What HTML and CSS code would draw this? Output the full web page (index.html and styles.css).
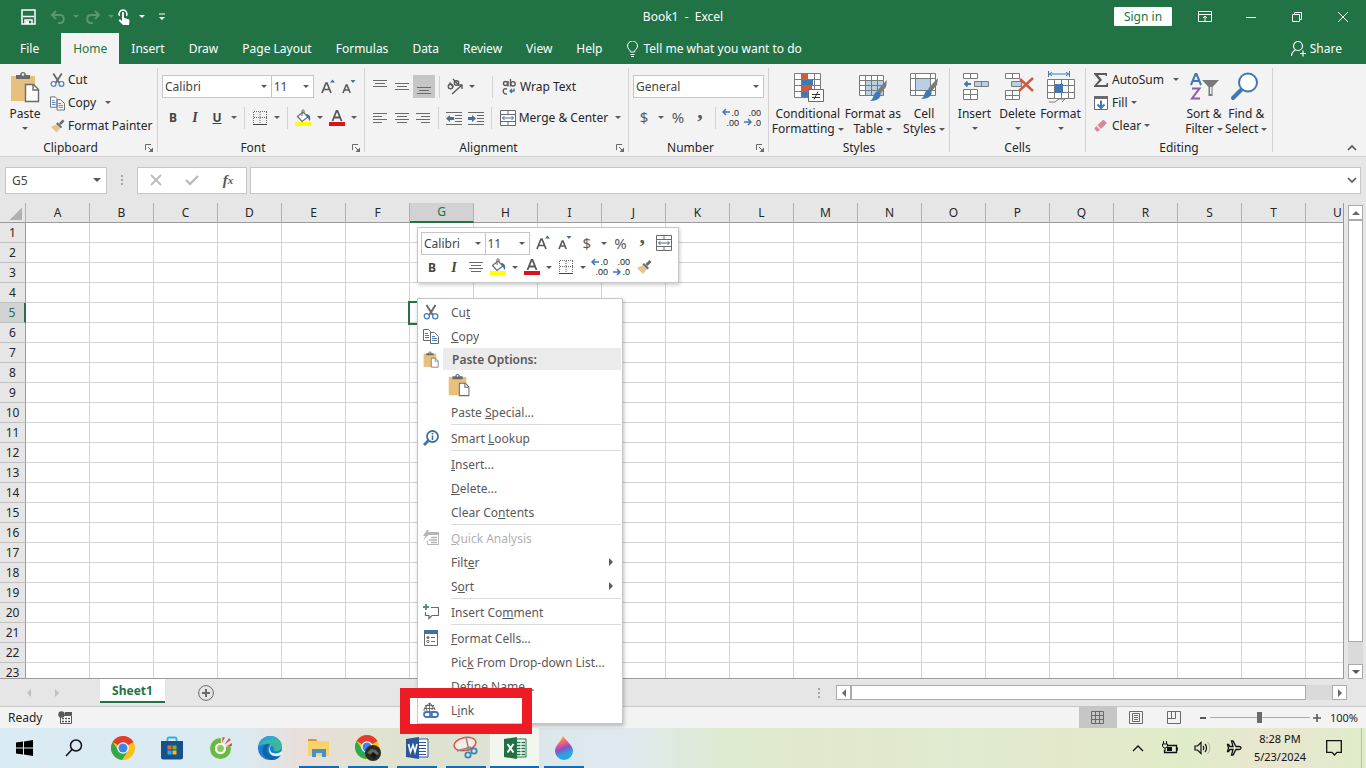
FILE: index.html
```
<!DOCTYPE html>
<html lang="en">
<head>
  <meta charset="UTF-8">
  <meta name="viewport" content="width=device-width, initial-scale=1">
  <title>Book1 - Excel</title>
  <link rel="stylesheet" href="styles.css">
</head>
<body>

  <!-- shared icons -->
  <svg class="sprite" aria-hidden="true">
    <symbol id="cut" viewBox="0 0 16 16">
      <path d="M3.5 1 9.8 11M12.5 1 6.2 11" stroke="#6a6a6a" stroke-width="2" fill="none"/>
      <circle cx="3.8" cy="12.2" r="2.6" fill="none" stroke="#4a7ebb" stroke-width="1.3"/>
      <circle cx="12.2" cy="12.2" r="2.6" fill="none" stroke="#4a7ebb" stroke-width="1.3"/>
    </symbol>
    <symbol id="copy" viewBox="0 0 16 16">
      <path d="M.5 1.500h5l2 2v9h-7zM7.500 4.500h4l4 4v7h-8z" fill="#fff" stroke="#6a6a6a"/>
      <path d="M2 5.500h3M2 7.500h4M2 9.500h4M9 8.500h3M9 10.500h5M9 12.500h5" stroke="#4a7ebb"/>
    </symbol>
    <symbol id="brush" viewBox="0 0 16 16">
      <path d="M1 9 7 6l4 4-4 5z" fill="#e8c48a"/>
      <path d="m6.500 5.500 1.500-1.500 5 5-1.500 1.500z" fill="#6a6a6a"/>
      <path d="m9.500 5 4-4 2 2-4 4z" fill="#6a6a6a"/>
    </symbol>
    <symbol id="paste" viewBox="0 0 30 32">
      <path d="M1 5h24v25H1z" fill="#e8c07d"/>
      <path d="M6 8V4h4c0-4 6-4 6 0h4v4z" fill="#6a6a6a"/>
      <circle cx="13" cy="3.500" r="1.300" fill="#f3f3f3"/>
      <path d="M15.500 13.500h8l5 5v12h-13z" fill="#fff" stroke="#6a6a6a" stroke-width="1.400"/>
      <path d="M23 14v5h5" fill="none" stroke="#6a6a6a" stroke-width="1.400"/>
    </symbol>
    <symbol id="grow" viewBox="0 0 16 16">
      <path d="m2 14 4-10h1l4 10M3.500 10.500h6" fill="none" stroke="#595959" stroke-width="1.700"/>
      <path d="m10 3.500 2.500-3 2.500 3z" fill="#41719c"/>
    </symbol>
    <symbol id="shrink" viewBox="0 0 16 16">
      <path d="m2 14 3.200-8h.8l3.200 8M3.200 11h5" fill="none" stroke="#595959" stroke-width="1.600"/>
      <path d="m9.500 1 2.500 3 2.500-3z" fill="#41719c"/>
    </symbol>
    <symbol id="borders" viewBox="0 0 16 16">
      <path d="M2 1.500h13M1.500 2v12M14.500 2v12M2 7.500h13M8 2v12" stroke="#6a6a6a" stroke-dasharray="1 1" fill="none"/>
      <path d="M1 14.500h14" stroke="#444"/>
    </symbol>
    <symbol id="fill" viewBox="0 0 18 18">
      <path d="M3.500 7.500 9 3l5 5-6 4.500z" fill="#fff" stroke="#6a6a6a" stroke-width="1.200"/>
      <path d="M8 7V1.500c0-1 2-1 2 0V4" fill="none" stroke="#6a6a6a"/>
      <path d="M12 5c3 0 5 2 4 7-2-1-1-3-3-4z" fill="#41719c"/>
      <path d="M1 13h16v4H1z" fill="#ff0"/>
    </symbol>
    <symbol id="color" viewBox="0 0 18 18">
      <path d="M4.500 12 8.500 2h1l4 10M6 8.500h6" fill="none" stroke="#595959" stroke-width="1.800"/>
      <path d="M1 13h16v4H1z" fill="#d8141a"/>
    </symbol>
    <symbol id="center" viewBox="0 0 16 16">
      <path d="M1 3.500h14M3 6.500h10M1 9.500h14M3 12.500h10" stroke="#6a6a6a"/>
    </symbol>
    <symbol id="merge" viewBox="0 0 16 16">
      <path d="M.5.5h15v15H.5zM.5 4.500h15M.5 11.500h15M8 0v4.500M8 11.500V16" fill="#fff" stroke="#6a6a6a"/>
      <path d="M2.500 8h11M4.500 6l-2 2 2 2M11.500 6l2 2-2 2" fill="none" stroke="#41719c"/>
    </symbol>
    <symbol id="launch" viewBox="0 0 8 8">
      <path d="M.5 6V.5H6M3 3l3 3" fill="none" stroke="#6a6a6a"/>
      <path d="M8 3.500V8H3.500z" fill="#6a6a6a"/>
    </symbol>
    <symbol id="arrow-left" viewBox="0 0 8 8">
      <path d="M8 4H1.500M4 1 1 4l3 3" fill="none" stroke="#3f78b5" stroke-width="1.500"/>
    </symbol>
    <symbol id="stylebrush" viewBox="0 0 18 24">
      <path d="m17 1-1 7-6 7-3-3 6-7z" fill="#7a7a7a"/>
      <path d="M6 13c3-1 6 1 4 5-2 3-6 4-10 4 4-2 3-7 6-9z" fill="#3f78b5"/>
    </symbol>
    <symbol id="chrome" viewBox="0 0 24 24">
      <circle cx="12" cy="12" r="12" fill="#fbc116"/>
      <path d="M12 12 1.600 6A12 12 0 0 1 22.400 6z" fill="#e33b2e"/>
      <path d="M1.600 6A12 12 0 0 0 11 24l6-9-5 2-5-3z" fill="#2da94f"/>
      <circle cx="12" cy="12" r="5.800" fill="#fff"/>
      <circle cx="12" cy="12" r="4.500" fill="#4081ec"/>
    </symbol>
  </svg>

  <header class="titlebar">
    <div class="quick">
      <button aria-label="Save"><svg width="16" height="16"><path d="M1 1h13v14H1z" fill="none" stroke="#fff" stroke-width="1.500"/><path d="M2 7.500h11M4 15v-4h7v4" stroke="#fff" stroke-width="1.500" fill="none"/><path d="M5 12h3v3H5z" fill="#fff"/></svg></button>
      <button class="off" aria-label="Undo"><svg width="16" height="16"><path d="M6 2 2 6l4 4M2 6h8c5 0 5 8 0 8H8" stroke="#fff" stroke-width="2" fill="none"/></svg></button>
      <button class="drop off" aria-label="Undo list"></button>
      <button class="off" aria-label="Redo"><svg width="16" height="16"><path d="m10 2 4 4-4 4M14 6H6c-5 0-5 8 0 8h2" stroke="#fff" stroke-width="2" fill="none"/></svg></button>
      <button class="drop off" aria-label="Redo list"></button>
      <button class="touch" aria-label="Touch mode"><svg width="14" height="18"><path d="M2.500 8a4 4 0 1 1 7 0" fill="none" stroke="#fff" stroke-width="1.500"/><path d="M5 5c0-1.500 2-1.500 2 0v5l4 1c1 0 1.500 1 1.500 2L12 17H6l-4-4c-1-1 1-2 2-1l1 1z" fill="#fff"/></svg></button>
      <button class="drop" aria-label="Touch options"></button>
      <button class="customize" aria-label="Customize"><svg width="8" height="8"><path d="M1 1h6" stroke="#fff"/><path d="M1 4h6L4 7z" fill="#fff"/></svg></button>
    </div>
    <h1>Book1&nbsp; -&nbsp; Excel</h1>
    <div class="window">
      <button class="signin">Sign in</button>
      <button aria-label="Ribbon display"><svg width="14" height="12"><path d="M.5.5h13v10H.5zM.5 3.500h13M7 10V5M5 7l2-2 2 2" fill="none" stroke="#fff"/></svg></button>
      <button aria-label="Minimize"><svg width="12" height="12"><path d="M1 6.500h10" stroke="#fff"/></svg></button>
      <button aria-label="Restore"><svg width="12" height="12"><path d="M1.500 3.500h7v7h-7zM3.500 3V1.500h7v7H9" fill="none" stroke="#fff"/></svg></button>
      <button aria-label="Close"><svg width="12" height="12"><path d="m1 1 10 10M11 1 1 11" stroke="#fff"/></svg></button>
    </div>
  </header>

  <nav class="tabs">
    <a href="#" class="file">File</a>
    <a href="#" class="active">Home</a>
    <a href="#">Insert</a>
    <a href="#">Draw</a>
    <a href="#">Page Layout</a>
    <a href="#">Formulas</a>
    <a href="#">Data</a>
    <a href="#">Review</a>
    <a href="#">View</a>
    <a href="#">Help</a>
    <a href="#" class="tell"><svg width="11" height="16"><path d="M3.500 11c0-2-3-3-3-6a5 5 0 0 1 10 0c0 3-3 4-3 6zM3.500 13.500h4M4 15.500h3" fill="none" stroke="#fff"/></svg>Tell me what you want to do</a>
    <a href="#" class="share"><svg width="15" height="17"><circle cx="7" cy="6" r="4.500" fill="none" stroke="#fff" stroke-width="1.200"/><path d="M.5 16c0-3 2-5 4-6M9 13.500h6M12 10.500v6" fill="none" stroke="#fff" stroke-width="1.200"/></svg>Share</a>
  </nav>

  <section class="ribbon">
    <div class="group clipboard">
      <div class="tools">
        <button class="big"><svg width="30" height="32"><use href="#paste"/></svg><span>Paste</span><i class="tri"></i></button>
        <div class="stack">
          <button><svg width="15" height="16"><use href="#cut"/></svg>Cut</button>
          <button><svg width="15" height="16"><use href="#copy"/></svg>Copy <i class="tri far"></i></button>
          <button><svg width="15" height="16"><use href="#brush"/></svg>Format Painter</button>
        </div>
      </div>
      <footer><span>Clipboard</span><button class="launcher" aria-label="Clipboard options"><svg width="8" height="8"><use href="#launch"/></svg></button></footer>
    </div>

    <div class="group font">
      <div class="tools rows">
        <div class="row">
          <span class="combo name"><select aria-label="Font"><option>Calibri</option></select></span>
          <span class="combo size"><select aria-label="Font size"><option>11</option></select></span>
          <button class="icon" aria-label="Increase font size"><svg width="16" height="16"><use href="#grow"/></svg></button>
          <button class="icon" aria-label="Decrease font size"><svg width="16" height="16"><use href="#shrink"/></svg></button>
        </div>
        <div class="row">
          <button class="icon"><b>B</b></button>
          <button class="icon"><em>I</em></button>
          <button class="icon"><u>U</u></button>
          <button class="drop" aria-label="Underline styles"></button>
          <span class="bar"></span>
          <button class="icon" aria-label="Borders"><svg width="16" height="16"><use href="#borders"/></svg></button>
          <button class="drop" aria-label="Border styles"></button>
          <span class="bar"></span>
          <button class="icon" aria-label="Fill color"><svg width="18" height="18"><use href="#fill"/></svg></button>
          <button class="drop" aria-label="Fill colors"></button>
          <button class="icon" aria-label="Font color"><svg width="18" height="18"><use href="#color"/></svg></button>
          <button class="drop" aria-label="Font colors"></button>
        </div>
      </div>
      <footer><span>Font</span><button class="launcher" aria-label="Font options"><svg width="8" height="8"><use href="#launch"/></svg></button></footer>
    </div>

    <div class="group alignment">
      <div class="tools rows">
        <div class="row">
          <button class="icon" aria-label="Top align"><svg width="16" height="16"><path d="M1 1.500h14M3 4.500h10M1 7.500h14" stroke="#6a6a6a"/></svg></button>
          <button class="icon" aria-label="Middle align"><svg width="16" height="16"><path d="M1 4.500h14M3 7.500h10M1 10.500h14" stroke="#6a6a6a"/></svg></button>
          <button class="icon pressed" aria-label="Bottom align"><svg width="16" height="16"><path d="M1 8.500h14M3 11.500h10M1 14.500h14" stroke="#6a6a6a"/></svg></button>
          <span class="bar"></span>
          <button class="icon" aria-label="Orientation"><svg width="18" height="18"><g fill="none" stroke="#595959" stroke-width="1.400"><circle cx="4.500" cy="8.500" r="2.200"/><path d="M3.500 4.500 7.500 9M7 1l5 5.500"/><circle cx="10.500" cy="5" r="2.200"/><path d="m6 16 10-9M12 7h4v4"/></g></svg></button>
          <button class="drop" aria-label="Orientation list"></button>
          <span class="bar late"></span>
          <button class="wide"><svg width="16" height="18"><g fill="none" stroke="#595959" stroke-width="1.400"><circle cx="4.500" cy="5.500" r="2"/><path d="M7 3v5.500M9.500 1v7.500M6 11c-5-2-5 6 0 5"/><circle cx="12" cy="5.800" r="2.200"/></g><path d="M13 10.500V13H9M11 11l-2 2 2 2" fill="none" stroke="#41719c" stroke-width="1.300"/></svg>Wrap Text</button>
        </div>
        <div class="row">
          <button class="icon" aria-label="Align left"><svg width="16" height="16"><path d="M1 3.500h14M1 6.500h9M1 9.500h14M1 12.500h9" stroke="#6a6a6a"/></svg></button>
          <button class="icon" aria-label="Center"><svg width="16" height="16"><use href="#center"/></svg></button>
          <button class="icon" aria-label="Align right"><svg width="16" height="16"><path d="M1 3.500h14M6 6.500h9M1 9.500h14M6 12.500h9" stroke="#6a6a6a"/></svg></button>
          <span class="bar"></span>
          <button class="icon" aria-label="Decrease indent"><svg width="16" height="16"><path d="M0 2.500h16M9 5.500h7M9 8.500h7M9 11.500h7M0 14.500h16" stroke="#6a6a6a"/><path d="M0 8.500 4 5v2h4v3H4v2z" fill="#41719c"/></svg></button>
          <button class="icon" aria-label="Increase indent"><svg width="16" height="16"><path d="M0 2.500h16M9 5.500h7M9 8.500h7M9 11.500h7M0 14.500h16" stroke="#6a6a6a"/><path d="M8 8.500 4 5v2H0v3h4v2z" fill="#41719c"/></svg></button>
          <span class="bar"></span>
          <button class="wide"><svg width="16" height="16"><use href="#merge"/></svg>Merge &amp; Center</button>
          <button class="drop" aria-label="Merge options"></button>
        </div>
      </div>
      <footer><span>Alignment</span><button class="launcher" aria-label="Alignment options"><svg width="8" height="8"><use href="#launch"/></svg></button></footer>
    </div>

    <div class="group number">
      <div class="tools rows">
        <div class="row">
          <span class="combo format"><select aria-label="Number format"><option>General</option></select></span>
        </div>
        <div class="row">
          <button class="icon sym">$</button>
          <button class="drop" aria-label="Currency list"></button>
          <button class="icon sym">%</button>
          <button class="icon comma">,</button>
          <span class="bar"></span>
          <button class="icon decimal" aria-label="Increase decimal"><svg width="8" height="8"><use href="#arrow-left"/></svg><span>.0<br>.00</span></button>
          <button class="icon decimal less" aria-label="Decrease decimal"><svg width="8" height="8"><use href="#arrow-left"/></svg><span>.00<br>.0</span></button>
        </div>
      </div>
      <footer><span>Number</span><button class="launcher" aria-label="Number options"><svg width="8" height="8"><use href="#launch"/></svg></button></footer>
    </div>

    <div class="group styles">
      <div class="tools">
        <button class="big"><svg width="32" height="32"><path d="M2.500 2.500h26v24h-26zM2.500 8.500h26M2.500 14.500h26M2.500 20.500h26M9.500 2v24M15.500 2v24M22.500 2v24" fill="#fff" stroke="#7a7a7a"/><path d="M10 3h6v5h-6zM10 15h10v5H10z" fill="#cf5b3f"/><path d="M10 9h11v5H10zM10 21h5v5h-5z" fill="#3f78b5"/><path d="M16.500 18.500h15v12h-15z" fill="#fff" stroke="#6a6a6a"/><path d="M20 23.500h8M20 26.500h8M26 20.500l-4 8" stroke="#333" fill="none"/></svg><span>Conditional<br>Formatting <i class="tri"></i></span></button>
        <button class="big"><svg width="32" height="32"><path d="M2.500 4.500h24v20h-24z" fill="#fff"/><path d="M9 10h18v15H9z" fill="#b8cfe4"/><path d="M2.500 4.500h24v20h-24zM2.500 9.500h24M2.500 14.500h24M2.500 19.500h24M8.500 4v20M14.500 4v20M20.500 4v20" fill="none" stroke="#7a7a7a"/><use href="#stylebrush" x="13" y="8" width="18" height="24"/></svg><span>Format as<br>Table <i class="tri"></i></span></button>
        <button class="big"><svg width="32" height="32"><path d="M2.500 2.500h25v22h-25zM2.500 7.500h25M2.500 19.500h25M7.500 2v22M22.500 2v22" fill="#fff" stroke="#7a7a7a"/><path d="M8 8h14v11H8z" fill="#b8cfe4"/><use href="#stylebrush" x="13" y="6" width="18" height="24"/></svg><span>Cell<br>Styles <i class="tri"></i></span></button>
      </div>
      <footer><span>Styles</span></footer>
    </div>

    <div class="group cells">
      <div class="tools">
        <button class="big"><svg width="32" height="32"><path d="M4.500 2.500h14v5h-14zM11.500 2v5M4.500 18.500h14v10h-14zM4.500 23.500h14M11.500 18v10" fill="#fff" stroke="#7a7a7a"/><path d="M15.500 10.500h14v5h-14zM22.500 10v5" fill="#b8cfe4" stroke="#7a7a7a"/><path d="M12 13H6M8.500 10.500 6 13l2.500 2.500" fill="none" stroke="#3f78b5" stroke-width="1.800"/></svg><span>Insert</span><i class="tri"></i></button>
        <button class="big"><svg width="32" height="32"><path d="M3.500 2.500h14v5h-14zM10.500 2v5M3.500 19.500h14v9h-14zM3.500 24.500h14M10.500 19v9" fill="#fff" stroke="#7a7a7a"/><path d="M9.500 10.500h10v5h-10z" fill="#b8cfe4" stroke="#7a7a7a"/><path d="m18 8 13 12M31 7 17 20" stroke="#cf5b3f" stroke-width="2.500"/></svg><span>Delete</span><i class="tri"></i></button>
        <button class="big"><svg width="32" height="32"><path d="M2.500 8.500h27v19h-27zM2.500 14.500h27M2.500 21.500h27M9.500 8v19M16.500 8v19M23.500 8v19" fill="#fff" stroke="#7a7a7a"/><path d="M10 13h8v9h-8z" fill="#3f78b5"/><path d="M4 31h6l4-3h6l-3 3" fill="#fff" stroke="#7a7a7a"/><path d="M3.500 0v6M24.500 0v6M4 3h20M7 1 4.500 3 7 5M21 1l2.500 2L21 5" fill="none" stroke="#3f78b5"/></svg><span>Format</span><i class="tri"></i></button>
      </div>
      <footer><span>Cells</span></footer>
    </div>

    <div class="group editing">
      <div class="tools">
        <div class="stack">
          <button><svg width="16" height="16"><path d="M1 1h13v3h-1l-1-1H5l4 5-5 5h9l1-2h1v4H1v-1l5-6-5-6z" fill="#595959"/></svg>AutoSum <i class="tri far"></i></button>
          <button><svg width="16" height="16"><path d="M1.500 2.500h13v12h-13z" fill="#fff" stroke="#6a6a6a"/><path d="M1 1h14v3H1z" fill="#6a6a6a"/><path d="M8 5.500V13M4.500 9.500 8 13l3.500-3.500" fill="none" stroke="#3f78b5" stroke-width="2"/></svg>Fill <i class="tri"></i></button>
          <button><svg width="16" height="16"><path d="M4.500 7 10 2c1-.5 4 2.500 3.500 3.500L8 11z" fill="#dd8499"/><path d="m3.500 8 3.500 4-2 1.500c-1 .5-4-2.500-3.500-3.500z" fill="#dd8499"/></svg>Clear <i class="tri"></i></button>
        </div>
        <button class="big"><svg width="32" height="32"><path d="m3 14 4.500-11h1L13 14M4.500 10h7" fill="none" stroke="#3f78b5" stroke-width="2"/><path d="M4 17.500h7.500L4 27.500h8" fill="none" stroke="#8e5ba8" stroke-width="2"/><path d="M14 9h17l-6.500 7v9h-4v-9z" fill="#7a7a7a"/><path d="M22 16h1.500v7H22z" fill="#f3f3f3"/></svg><span>Sort &amp;<br>Filter <i class="tri"></i></span></button>
        <button class="big"><svg width="32" height="32"><path d="M11 19 3 27" stroke="#3f78b5" stroke-width="4" stroke-linecap="round"/><circle cx="18" cy="11.500" r="9" fill="#fff" stroke="#3f78b5" stroke-width="2"/></svg><span>Find &amp;<br>Select <i class="tri"></i></span></button>
      </div>
      <footer><span>Editing</span></footer>
    </div>
    <button class="collapse" aria-label="Collapse the ribbon"><svg width="10" height="8"><path d="m1 6 4-4 4 4" fill="none" stroke="#595959" stroke-width="1.700"/></svg></button>
  </section>

  <div class="formula">
    <span class="combo cellname"><select aria-label="Name box"><option>G5</option></select></span>
    <span class="dots"></span>
    <div class="entry">
      <button aria-label="Cancel"><svg width="12" height="12"><path d="m1 1 10 10M11 1 1 11" stroke="#bbb" stroke-width="1.800"/></svg></button>
      <button aria-label="Enter"><svg width="14" height="12"><path d="m1 6 4 4 8-8" fill="none" stroke="#bbb" stroke-width="2.400"/></svg></button>
      <button class="fx" aria-label="Insert function">f<sub>x</sub></button>
    </div>
    <div class="bar-input">
      <input type="text" aria-label="Formula bar">
      <button aria-label="Expand formula bar"><svg width="10" height="8"><path d="m1 2 4 4 4-4" fill="none" stroke="#595959" stroke-width="1.700"/></svg></button>
    </div>
  </div>

  <main class="workbook">
    <div class="grid">
      <table id="cells"></table>
    </div>
    <div class="vscroll">
      <button aria-label="Scroll up"><i class="tri up"></i></button>
      <div class="thumb"></div>
      <div class="track"></div>
      <button aria-label="Scroll down"><i class="tri down"></i></button>
    </div>

    <div class="minibar">
      <div class="row">
        <span class="combo name"><select aria-label="Font"><option>Calibri</option></select></span>
        <span class="combo size"><select aria-label="Font size"><option>11</option></select></span>
        <button class="icon" aria-label="Increase font size"><svg width="16" height="16"><use href="#grow"/></svg></button>
        <button class="icon" aria-label="Decrease font size"><svg width="16" height="16"><use href="#shrink"/></svg></button>
        <button class="icon sym">$</button>
        <button class="drop" aria-label="Currency list"></button>
        <button class="icon sym">%</button>
        <button class="icon comma">,</button>
        <button class="icon" aria-label="Merge and center"><svg width="16" height="16"><use href="#merge"/></svg></button>
      </div>
      <div class="row">
        <button class="icon"><b>B</b></button>
        <button class="icon"><em>I</em></button>
        <button class="icon" aria-label="Center"><svg width="16" height="16"><use href="#center"/></svg></button>
        <button class="icon" aria-label="Fill color"><svg width="18" height="18"><use href="#fill"/></svg></button>
        <button class="drop" aria-label="Fill colors"></button>
        <button class="icon" aria-label="Font color"><svg width="18" height="18"><use href="#color"/></svg></button>
        <button class="drop" aria-label="Font colors"></button>
        <button class="icon" aria-label="Borders"><svg width="16" height="16"><use href="#borders"/></svg></button>
        <button class="drop" aria-label="Border styles"></button>
        <button class="icon decimal" aria-label="Increase decimal"><svg width="8" height="8"><use href="#arrow-left"/></svg><span>.0<br>.00</span></button>
        <button class="icon decimal less" aria-label="Decrease decimal"><svg width="8" height="8"><use href="#arrow-left"/></svg><span>.00<br>.0</span></button>
        <button class="icon" aria-label="Format painter"><svg width="16" height="16"><use href="#brush"/></svg></button>
      </div>
    </div>

    <div class="menu">
      <button><svg width="16" height="16"><use href="#cut"/></svg><span>Cu<u>t</u></span></button>
      <button><svg width="16" height="16"><use href="#copy"/></svg><span><u>C</u>opy</span></button>
      <div class="heading"><svg width="16" height="17"><use href="#paste"/></svg><b>Paste Options:</b></div>
      <button class="option" aria-label="Paste"><svg width="22" height="24"><use href="#paste"/></svg></button>
      <button><span>Paste <u>S</u>pecial...</span></button>
      <hr>
      <button><svg width="16" height="16"><circle cx="9.500" cy="6.500" r="5.500" fill="none" stroke="#41719c" stroke-width="1.800"/><path d="M5.500 10.500 1 15" stroke="#41719c" stroke-width="2.800"/><path d="M9.500 3v1.500M9.500 5.500V10" stroke="#41719c" stroke-width="1.600"/></svg><span>Smart <u>L</u>ookup</span></button>
      <hr>
      <button><span><u>I</u>nsert...</span></button>
      <button><span><u>D</u>elete...</span></button>
      <button><span>Clear Co<u>n</u>tents</span></button>
      <hr>
      <button disabled><svg width="16" height="16"><path d="M4.500 6V2.500h11v12h-11V11" fill="none" stroke="#b5b5b5"/><path d="M5 2h10v3H5z" fill="#b5b5b5"/><path d="M8 7.500h6M6 10h8M8 12.500h6" stroke="#b5b5b5" stroke-width="1.500"/><path d="M4 0 0 6h2.500L0 11l6-7H3.500L6 0z" fill="#b5b5b5"/></svg><span><u>Q</u>uick Analysis</span></button>
      <button class="sub"><span>Filt<u>e</u>r</span></button>
      <button class="sub"><span>S<u>o</u>rt</span></button>
      <hr>
      <button><svg width="16" height="16"><path d="M8 3.500h7.500v8H9l-3 3v-3H2.500V8" fill="none" stroke="#6a6a6a" stroke-width="1.200"/><path d="M3 0v6M0 3h6" stroke="#4e9078" stroke-width="1.800"/></svg><span>Insert Co<u>m</u>ment</span></button>
      <hr>
      <button><svg width="16" height="16"><path d="M1.500 2.500h13v13h-13z" fill="#fff" stroke="#6a6a6a"/><path d="M1 0h14v4H1z" fill="#41719c"/><path d="M8 7.500h4M8 11.500h4" stroke="#6a6a6a"/><circle cx="5" cy="7.500" r="1.500" fill="#6a6a6a"/><circle cx="5" cy="11.500" r="1.200" fill="none" stroke="#6a6a6a"/></svg><span><u>F</u>ormat Cells...</span></button>
      <button><span>Pic<u>k</u> From Drop-down List...</span></button>
      <button><span>Define N<u>a</u>me...</span></button>
      <button class="link"><svg width="16" height="16"><path d="M1 9a5.500 5.500 0 1 1 11-1M6.500 1v8M1 6.500h11M2 3.500h9M4 9c-1-3-1-6 2.500-8M9 8c1-3 0-6-2.500-7" fill="none" stroke="#6a6a6a"/><path d="M0 9h16v7H0z" fill="#fff"/><rect x="1" y="10" width="8" height="5" rx="2.500" fill="none" stroke="#3f78b5" stroke-width="1.800"/><rect x="7" y="10" width="8" height="5" rx="2.500" fill="none" stroke="#3f78b5" stroke-width="1.800"/></svg><span>L<u>i</u>nk</span></button>
    </div>
  </main>

  <div class="sheets">
    <button class="step" aria-label="Previous sheet"><i class="tri left"></i></button>
    <button class="step" aria-label="Next sheet"><i class="tri right"></i></button>
    <a href="#" class="sheet">Sheet1</a>
    <button class="add" aria-label="New sheet"><svg width="16" height="16"><circle cx="8" cy="8" r="7.400" fill="none" stroke="#6a6a6a"/><path d="M8 4v8M4 8h8" stroke="#6a6a6a" stroke-width="2"/></svg></button>
    <span class="dots"></span>
    <div class="hscroll">
      <button aria-label="Scroll left"><i class="tri left"></i></button>
      <div class="thumb"></div>
      <div class="track"></div>
      <button aria-label="Scroll right"><i class="tri right"></i></button>
    </div>
  </div>

  <div class="status">
    <span>Ready</span>
    <button class="macro" aria-label="Record macro"><svg width="14" height="14"><path d="M2.500 4.500h11v8h-11z" fill="#fff" stroke="#595959"/><path d="M7 1h7v3H7z" fill="#595959"/><path d="M4 7.500h8M4 10.500h8" stroke="#595959" stroke-width="1.500" stroke-dasharray="2 1"/><circle cx="3.500" cy="3.500" r="3.200" fill="#595959"/></svg></button>
    <div class="views">
      <button class="pressed" aria-label="Normal view"><svg width="13" height="13"><path d="M.5.500h12v12H.5zM.5 4.500h12M.5 8.500h12M4.500.500v12M8.500.500v12" fill="none" stroke="#6a6a6a"/></svg></button>
      <button aria-label="Page layout view"><svg width="14" height="13"><path d="M.5.500h13v12H.5zM3.500 2.500h7v8h-7zM5 4.500h4M5 6.500h4M5 8.500h4" fill="none" stroke="#6a6a6a"/></svg></button>
      <button aria-label="Page break view"><svg width="14" height="13"><path d="M.5.500h13v12H.5zM4.500.500v7M8.500.500v7M.5 7.500h8" fill="none" stroke="#6a6a6a"/></svg></button>
    </div>
    <button class="zoom" aria-label="Zoom out"><svg width="8" height="8"><path d="M1 4h6" stroke="#595959" stroke-width="2"/></svg></button>
    <input type="range" min="0" max="100" value="50" aria-label="Zoom">
    <button class="zoom" aria-label="Zoom in"><svg width="8" height="8"><path d="M0 4h8M4 0v8" stroke="#595959" stroke-width="1.600"/></svg></button>
    <span class="percent">100%</span>
  </div>

  <footer class="taskbar">
    <button aria-label="Start"><svg width="17" height="16"><path d="M0 2.500 7 1.500v6H0zM8 1.400 17 0v7.500H8zM0 8.500h7v6l-7-1zM8 8.500h9V16l-9-1.400z" fill="#000"/></svg></button>
    <button aria-label="Search"><svg width="18" height="18"><circle cx="11" cy="6.500" r="5.500" fill="none" stroke="#111" stroke-width="1.500"/><path d="M7 10.500 1 17" stroke="#111" stroke-width="1.500"/></svg></button>
    <button aria-label="Chrome"><svg width="24" height="24"><use href="#chrome"/></svg></button>
    <button aria-label="Store"><svg width="24" height="24"><path d="M7.500 6V3c0-1 .5-1.500 1.500-1.500h6c1 0 1.500.5 1.500 1.500v3" fill="none" stroke="#2ab0e6" stroke-width="1.800"/><path d="M1 5h22v16a2.500 2.500 0 0 1-2.500 2.500h-17A2.500 2.500 0 0 1 1 21z" fill="#17508a"/><path d="M7.500 9.500h4v4h-4z" fill="#f1613a"/><path d="M12.500 9.500h4v4h-4z" fill="#7fba00"/><path d="M7.500 14.500h4v4h-4z" fill="#2ab0e6"/><path d="M12.500 14.500h4v4h-4z" fill="#fdb813"/></svg></button>
    <button aria-label="Coc Coc"><svg width="24" height="24"><circle cx="11.500" cy="12.500" r="8" fill="none" stroke="#69b944" stroke-width="5"/><path d="M12 9V0h12v9l-6 2z" fill="#dcebf1"/><circle cx="11.500" cy="12.500" r="5.500" fill="#f5fbf0"/><circle cx="11.500" cy="12.500" r="3.400" fill="#8aca5c"/><path d="m13 7 .5-6 2.500.5zM15.500 8.500 20 2l2 2zM17 10.500 23 7v3z" fill="#e0584c"/></svg></button>
    <button aria-label="Edge"><svg width="24" height="24"><circle cx="12" cy="12" r="12" fill="#1b7fcf"/><path d="M1 10C2 3 8 0 12 0c7 0 12 5 12 10 0 4-4 6-8 5 2-6-8-9-15-5z" fill="#38b99d"/><path d="M1 10C2 3 8 0 12 0c3 0 6 1 8 3C13 2 6 4 1 10z" fill="#2ba6d8"/><path d="M5 12c-2 6 2 11 9 12 4 0 7-2 9-5-6 3-14 1-14-6 0-2 1-4 3-5-3-1-6 1-7 4z" fill="#1264a8"/><path d="M14 9c-3 1-3 7 1 8 3 1 7 0 8.500-2l.5 3-1 1c-6 3-12 0-12-5 0-3 1-5 3-5z" fill="#e5f2f5"/></svg></button>
    <button class="open" aria-label="File Explorer"><svg width="24" height="24"><path d="M1 3h8l2 3H1z" fill="#d9992a"/><path d="M1 5h21v15H1z" fill="#f9d36a"/><path d="M5 21v-8h14v8h-4v-4H9v4z" fill="#4591cc"/></svg></button>
    <button class="open" aria-label="Chrome profile"><svg width="26" height="26"><use href="#chrome" width="24" height="24"/><circle cx="18" cy="18" r="8" fill="#2c2c26"/><path d="m12 18 4-4 5 1 3 4-4 2-4-1z" fill="#66685a"/><path d="m15 20 3-3 4 3-3 4z" fill="#15171a"/></svg></button>
    <button class="open" aria-label="Word"><svg width="24" height="24"><path d="M12 3h11v18H12z" fill="#fff" stroke="#2b579a"/><path d="M14 6.500h7M14 9.500h7M14 12.500h7M14 15.500h7M14 18.500h7" stroke="#2b579a"/><path d="M1 3 14 1v22L1 21z" fill="#2b579a"/><path d="m3.500 8 2 8L8 9l2 7 2-8" fill="none" stroke="#fff" stroke-width="1.600"/></svg></button>
    <button class="open" aria-label="Snipping Tool"><svg width="26" height="26"><ellipse cx="12" cy="9" rx="11" ry="6.500" transform="rotate(-12 12 9)" fill="#f7ebe7" stroke="#d6544c" stroke-width="1.500"/><path d="m4 16 14-4M13 2l3 14" stroke="#8a8a8a" stroke-width="1.500"/><circle cx="15" cy="20" r="2.700" fill="none" stroke="#3b87b8" stroke-width="1.800"/><circle cx="21" cy="16" r="2.700" fill="none" stroke="#3b87b8" stroke-width="1.800"/></svg></button>
    <button class="open current" aria-label="Excel"><svg width="24" height="24"><path d="M12 3h11v18H12z" fill="#fff" stroke="#207245"/><path d="M14 6.500h8M14 9.500h8M14 12.500h8M14 15.500h8M14 18.500h8" stroke="#207245" stroke-width="1.600"/><path d="M18 4v16" stroke="#fff"/><path d="M1 3 14 1v22L1 21z" fill="#207245"/><path d="m4.500 8 6 8.500M10.500 8l-6 8.500" stroke="#fff" stroke-width="2"/></svg></button>
    <button class="open" aria-label="Paint 3D"><svg width="20" height="26"><defs><linearGradient id="drop" x1="0" y1="0" x2=".3" y2="1"><stop offset=".1" stop-color="#fbb416"/><stop offset=".4" stop-color="#f0568c"/><stop offset=".6" stop-color="#8b50c8"/><stop offset=".85" stop-color="#26a6e0"/></linearGradient></defs><path d="M9 1c3 5 10 9 10 15a9 9 0 0 1-18 0C1 10 7 7 9 1z" fill="url(#drop)"/></svg></button>
    <div class="tray">
      <button aria-label="Hidden icons"><svg width="12" height="8"><path d="m1 7 5-5 5 5" fill="none" stroke="#111" stroke-width="1.400"/></svg></button>
      <button aria-label="Battery"><svg width="16" height="14"><path d="M6 4.500h8.500v7h-12V9" fill="none" stroke="#111" stroke-width="1.300"/><path d="M5 6h5v4H5zM15 6.500h1v3h-1z" fill="#111"/><path d="M1.500 0v3M4.500 0v3M.5 3h5v2L4 7H2L.5 5zM3 7v3" stroke="#111" fill="none"/></svg></button>
      <button aria-label="Volume"><svg width="17" height="14"><path d="M1 5h2.500L7 1.500v11L3.500 9H1z" fill="none" stroke="#111" stroke-width="1.200"/><path d="M9 5c1 1 1 3 0 4M11 3c2 2 2 6 0 8" fill="none" stroke="#111" stroke-width="1.200"/><path d="M13.500 1c3 3 3 9 0 12" fill="none" stroke="#aaa"/></svg></button>
      <button aria-label="Airplane mode"><svg width="16" height="16"><path d="M15 8c0-1-1-1.500-2-1.500h-3L7 1H5.500L7 6.500H4L2.500 4.500h-1L2.500 8l-1 3.500h1L4 9.500h3L5.500 15H7l3-5.500h3c1 0 2-.5 2-1.500z" fill="none" stroke="#111" stroke-width="1.300"/></svg></button>
      <time>8:28 PM<br>5/23/2024</time>
      <button class="notice" aria-label="Notifications"><svg width="16" height="16"><path d="M.7.700h14.600v11.600H11L8.500 15 6 12.300H.7z" fill="none" stroke="#111" stroke-width="1.300"/></svg></button>
      <span class="desktop"></span>
    </div>
  </footer>

<script>
  const letters = 'ABCDEFGHIJKLMNOPQRSTU'.split('');
  const selected = { col: 'G', row: 5 };
  let html = '<thead><tr><th class="corner"></th>';
  letters.forEach(c => {
    html += `<th scope="col"${c === selected.col ? ' class="on"' : ''}>${c}</th>`;
  });
  html += '</tr></thead><tbody>';
  for (let r = 1; r <= 23; r++) {
    html += `<tr><th scope="row"${r === selected.row ? ' class="on"' : ''}>${r}</th>`;
    letters.forEach(c => {
      html += c === selected.col && r === selected.row ? '<td class="cursor"></td>' : '<td></td>';
    });
    html += '</tr>';
  }
  document.getElementById('cells').innerHTML = html + '</tbody>';
</script>

</body>
</html>
```
FILE: styles.css
```
*,
*::before,
*::after {
  margin: 0;
  padding: 0;
  box-sizing: border-box;
}

body {
  display: flex;
  flex-direction: column;
  height: 100vh;
  overflow: hidden;
  font-family: 'Segoe UI', 'Noto Sans', 'Open Sans', sans-serif;
  font-size: 12px;
  line-height: 15px;
  color: #262626;
  background: #e6e6e6;
}

button,
select,
input {
  font: inherit;
  color: inherit;
  background: none;
  border: none;
  outline: none;
}

button {
  display: flex;
  align-items: center;
  justify-content: center;
  white-space: nowrap;
}

a {
  color: inherit;
  text-decoration: none;
}

svg {
  flex: none;
  display: block;
}

.sprite {
  position: absolute;
  width: 0;
  height: 0;
}

/* small triangles */
.tri,
.drop::after,
.combo::after {
  content: '';
  display: inline-block;
  border: 3px solid transparent;
  border-top-color: #595959;
  border-bottom: none;
  vertical-align: middle;
}

.tri.up {
  border: 4px solid transparent;
  border-top: none;
  border-bottom-color: #6a6a6a;
}

.tri.down {
  border-width: 4px 4px 0;
}

.tri.left {
  border: 4px solid transparent;
  border-left: none;
  border-right-color: #6a6a6a;
}

.tri.right {
  border: 4px solid transparent;
  border-right: none;
  border-left-color: #6a6a6a;
}

.drop {
  width: 12px;
  height: 22px;
}

/* title bar */
.titlebar {
  display: grid;
  grid-template-columns: 1fr auto 1fr;
  align-items: center;
  height: 33px;
  flex: none;
  color: #fff;
  background: #217346;
}

.titlebar h1 {
  font-size: 12px;
  font-weight: normal;
}

.quick {
  display: flex;
  align-items: center;
  padding-left: 18px;
}

.quick button {
  width: 22px;
  height: 24px;
}

.quick .drop {
  width: 13px;
}

.quick button:first-child {
  margin-right: 7px;
}

.quick .drop::after {
  border-top-color: #fff;
}

.quick .off {
  opacity: 0.25;
}

.quick .touch {
  margin-left: -4px;
}

.quick .customize {
  margin-left: 3px;
}

.window {
  display: flex;
  align-items: center;
  justify-content: flex-end;
}

.window button {
  width: 46px;
  height: 32px;
}

.window .signin {
  width: 58px;
  height: 19px;
  margin-right: 10px;
  color: #217346;
  background: #fff;
  border-radius: 1px;
}

.tabs {
  display: flex;
  height: 31px;
  flex: none;
  color: #fff;
  background: #217346;
}

.tabs a {
  display: flex;
  align-items: center;
  padding: 0 12px;
  white-space: nowrap;
}

.tabs .file {
  padding: 0 22px 0 20px;
}

.tabs .active {
  color: #217346;
  background: #f3f3f3;
}

.tell,
.share {
  gap: 6px;
}

.tabs .share {
  margin-left: auto;
  padding-right: 24px;
  gap: 4px;
}

/* ribbon */
.ribbon {
  display: flex;
  height: 93px;
  flex: none;
  background: #f3f3f3;
  border-bottom: 1px solid #d2d2d2;
}

.group {
  display: flex;
  flex-direction: column;
  margin: 4px 0;
  border-right: 1px solid #d2d2d2;
}

.clipboard { width: 158px; }
.font { width: 207px; }
.alignment { width: 264px; }
.number { width: 140px; }
.styles { width: 181px; }
.cells { width: 136px; }
.editing { width: 187px; }

.tools {
  display: flex;
  flex: none;
  height: 72px;
  padding: 0 4px;
}

.rows {
  flex-direction: column;
  gap: 8px;
  padding: 7px 4px;
}

.row {
  display: flex;
  align-items: center;
  height: 23px;
}

.group footer {
  display: flex;
  flex: none;
  height: 16px;
  line-height: 16px;
}

.group footer span {
  flex: 1;
  text-align: center;
}

.launcher {
  width: 16px;
}

.big {
  flex-direction: column;
  justify-content: flex-start;
  min-width: 42px;
  padding-top: 3px;
}

.big svg {
  margin-bottom: 3px;
}

.big > .tri {
  margin-top: 6px;
}

.stack {
  display: flex;
  flex-direction: column;
  padding-left: 4px;
}

.stack button {
  justify-content: flex-start;
  height: 23px;
  gap: 3px;
}

.stack .far {
  margin-left: 6px;
}

.icon {
  width: 22px;
  height: 23px;
}

.pressed {
  background: #c6c6c6;
}

.icon b,
.icon em,
.icon u {
  color: #444;
  font-weight: bold;
}

.icon em {
  font-family: 'Liberation Serif', serif;
  font-size: 14px;
}

.sym {
  font-size: 15px;
  color: #595959;
}

.comma {
  height: 30px;
  font-family: 'Liberation Serif', serif;
  font-size: 22px;
  font-weight: bold;
  color: #595959;
  align-items: flex-start;
}

.decimal {
  position: relative;
  font-family: 'Liberation Sans', sans-serif;
  font-size: 9px;
  line-height: 10px;
}

.decimal span {
  width: 16px;
  text-align: right;
}

.decimal svg {
  position: absolute;
  left: 2px;
  top: 2px;
}

.decimal.less svg {
  top: auto;
  bottom: 3px;
  transform: rotate(180deg);
}

.bar {
  width: 1px;
  height: 22px;
  margin: 0 4px;
  background: #d2d2d2;
}

.bar.late {
  margin-left: 14px;
}

.wide {
  gap: 3px;
  padding-left: 4px;
}

.alignment .wide + .drop {
  margin-left: 4px;
}

/* drop-down boxes */
.combo {
  position: relative;
  display: flex;
  height: 23px;
  background: #fff;
  border: 1px solid #c6c6c6;
}

.combo select {
  appearance: none;
  width: 100%;
  padding-left: 2px;
  color: #444;
}

.combo::after {
  position: absolute;
  right: 4px;
  top: 9px;
  pointer-events: none;
}

.combo.name { width: 112px; }
.combo.size { width: 44px; margin: 0 3px 0 -1px; }
.combo.format { width: 131px; }

.styles .tools {
  justify-content: center;
  gap: 3px;
}

.cells .tools {
  justify-content: center;
  gap: 1px;
}

.editing .stack {
  width: 93px;
  padding-left: 3px;
}

.collapse {
  margin: auto 9px 4px auto;
}

/* formula bar */
.formula {
  display: flex;
  align-items: center;
  height: 46px;
  flex: none;
  padding: 0 5px;
}

.formula .combo {
  width: 102px;
  height: 27px;
}

.formula .combo select {
  padding-left: 6px;
}

.formula .combo::after {
  border-width: 4px 4px 0;
  right: 5px;
  top: 10px;
}

.dots {
  width: 2px;
  height: 10px;
  background: repeating-linear-gradient(#a6a6a6 0 2px, transparent 2px 4px);
}

.formula .dots {
  margin: 0 14px;
}

.entry {
  display: flex;
  width: 110px;
  height: 27px;
  margin-right: 3px;
  background: #fff;
  border: 1px solid #c6c6c6;
}

.entry button {
  flex: 1;
}

.fx {
  font-family: 'Liberation Serif', serif;
  font-size: 15px;
  font-style: italic;
  font-weight: bold;
  color: #595959;
}

.fx sub {
  font-size: 11px;
}

.bar-input {
  display: flex;
  flex: 1;
  height: 27px;
  background: #fff;
  border: 1px solid #c6c6c6;
}

.bar-input input {
  flex: 1;
}

.bar-input button {
  width: 16px;
}

/* worksheet */
.workbook {
  position: relative;
  z-index: 2;
  display: flex;
  flex: 1;
  min-height: 0;
}

.grid {
  flex: 1;
  min-width: 0;
  overflow: hidden;
  border-right: 1px solid #9b9b9b;
  border-bottom: 1px solid #9b9b9b;
}

.grid table {
  width: 1370px;
  table-layout: fixed;
  border-collapse: separate;
  border-spacing: 0;
}

.grid th {
  height: 20px;
  font-weight: normal;
  line-height: 18px;
  background: #e6e6e6;
}

.grid thead th {
  border-right: 1px solid #b1b1b1;
  border-bottom: 1px solid #9b9b9b;
}

.grid tbody th {
  border-right: 1px solid #9b9b9b;
  border-bottom: 1px solid #c0c0c0;
}

.grid th:first-child {
  width: 26px;
}

.grid .corner {
  background: linear-gradient(135deg, transparent 50%, #b1b1b1 50%) 10px 5px / 12px 12px no-repeat #e6e6e6;
}

.grid th.on {
  color: #217346;
  background: #d2d2d2;
}

.grid thead th.on {
  border-bottom: 2px solid #217346;
}

.grid tbody th.on {
  border-right: 2px solid #217346;
}

.grid td {
  background: #fff;
  border-right: 1px solid #d4d4d4;
  border-bottom: 1px solid #d4d4d4;
}

.grid .cursor {
  outline: 2px solid #217346;
}

.vscroll {
  display: flex;
  flex-direction: column;
  width: 15px;
  margin: 2px 3px 0 4px;
}

.vscroll button,
.hscroll button,
.thumb {
  background: #fff;
  border: 1px solid #ababab;
}

.vscroll button {
  height: 15px;
}

.thumb {
  flex: 1;
}

.track {
  background: #dadada;
}

.vscroll .track {
  height: 22px;
}

/* floating toolbar */
.minibar {
  position: absolute;
  left: 417px;
  top: 24px;
  width: 262px;
  padding: 3px;
  background: #fff;
  border: 1px solid #c6c6c6;
  box-shadow: 1px 2px 4px rgba(0, 0, 0, 0.2);
}

.minibar .row {
  height: 24px;
}

.minibar .combo.name { width: 65px; }
.minibar .combo.size { width: 46px; margin-right: 2px; }

/* context menu */
.menu {
  position: absolute;
  left: 417px;
  top: 95px;
  width: 206px;
  padding: 1px 0;
  color: #595959;
  background: #fff;
  border: 1px solid #c6c6c6;
  box-shadow: 1px 2px 4px rgba(0, 0, 0, 0.25);
}

.menu button {
  position: relative;
  justify-content: flex-start;
  width: 100%;
  height: 24px;
  padding-left: 33px;
}

.menu button svg {
  margin: 0 12px 0 -28px;
}

.menu hr {
  height: 1px;
  margin: 0 1px 1px 33px;
  border: none;
  background: #dadada;
}

.menu .heading {
  display: flex;
  align-items: center;
  height: 22px;
  margin-right: 1px;
  padding-left: 5px;
  background: linear-gradient(90deg, transparent 25px, #ebebeb 25px);
}

.heading b {
  margin-left: 13px;
  font-weight: 600;
}

.menu .option {
  height: 30px;
}

.menu .option svg {
  margin: 0 0 0 -3px;
}

.menu button:disabled {
  color: #b1b1b1;
}

.menu .sub::after {
  content: '';
  margin: 0 9px 0 auto;
  border: 4px solid transparent;
  border-left-color: #595959;
  border-right: none;
}

/* red frame round the last entry */
.menu .link::after {
  content: '';
  position: absolute;
  left: -18px;
  top: -10px;
  width: 132px;
  height: 46px;
  border: 10px solid #ed1c24;
  box-shadow: inset 7px 0 #fbfbfb;
}

/* sheet tabs */
.sheets {
  display: flex;
  align-items: center;
  height: 28px;
  flex: none;
  padding: 0 19px 0 15px;
  border-bottom: 1px solid #c6c6c6;
}

.step {
  width: 28px;
  opacity: 0.3;
}

.sheet {
  align-self: flex-start;
  width: 65px;
  height: 24px;
  margin: 0 33px 0 29px;
  line-height: 24px;
  text-align: center;
  font-weight: bold;
  color: #217346;
  background: #fff;
  border-bottom: 2px solid #217346;
}

.sheets .dots {
  margin: 0 16px 0 auto;
}

.hscroll {
  display: flex;
  width: 511px;
  height: 15px;
}

.hscroll button {
  width: 15px;
}

.hscroll .track {
  width: 26px;
}

/* status bar */
.status {
  display: flex;
  align-items: center;
  height: 21px;
  flex: none;
  padding: 0 8px;
  background: #f3f3f3;
}

.macro {
  margin-left: 16px;
}

.views {
  display: flex;
  margin-left: auto;
  margin-right: 3px;
}

.views button {
  width: 38px;
  height: 21px;
}

.zoom {
  width: 14px;
}

.status input {
  appearance: none;
  width: 100px;
  height: 1px;
  background: #ababab;
}

.status input::-webkit-slider-thumb {
  appearance: none;
  width: 5px;
  height: 11px;
  background: #6a6a6a;
}

.percent {
  margin-left: 6px;
  font-size: 11px;
}

/* taskbar */
.taskbar {
  display: flex;
  height: 40px;
  flex: none;
  color: #111;
  background: linear-gradient(90deg, #d9ebf4 0, #dbeaf1 18%, #e9dedb 22%, #dfe3cf 28%, #dde2d2 35%, #dce8ee 41%, #dfe8ee 46%, #deebd0 53%, #e2e8cb 62%, #dfebd0 70%, #e4e8cb 78%, #dfecc9 87%, #e9e6cf 93%, #dfecca 100%);
}

.taskbar > button {
  position: relative;
  width: 49px;
}

.taskbar .open::after {
  content: '';
  position: absolute;
  bottom: 0;
  left: 5px;
  right: 4px;
  height: 2px;
  background: #0f6cbd;
}

.taskbar .current {
  background: #f1f6ef;
}

.taskbar .current::after {
  left: 0;
  right: 0;
}

.tray {
  display: flex;
  margin-left: auto;
}

.tray button {
  width: 32px;
}

.tray time {
  width: 54px;
  margin-left: 3px;
  padding-top: 2px;
  font-size: 11px;
  line-height: 18px;
  text-align: center;
}

.tray .notice {
  width: 54px;
}

.desktop {
  width: 5px;
  border-left: 1px solid #b8c0a8;
}
```
